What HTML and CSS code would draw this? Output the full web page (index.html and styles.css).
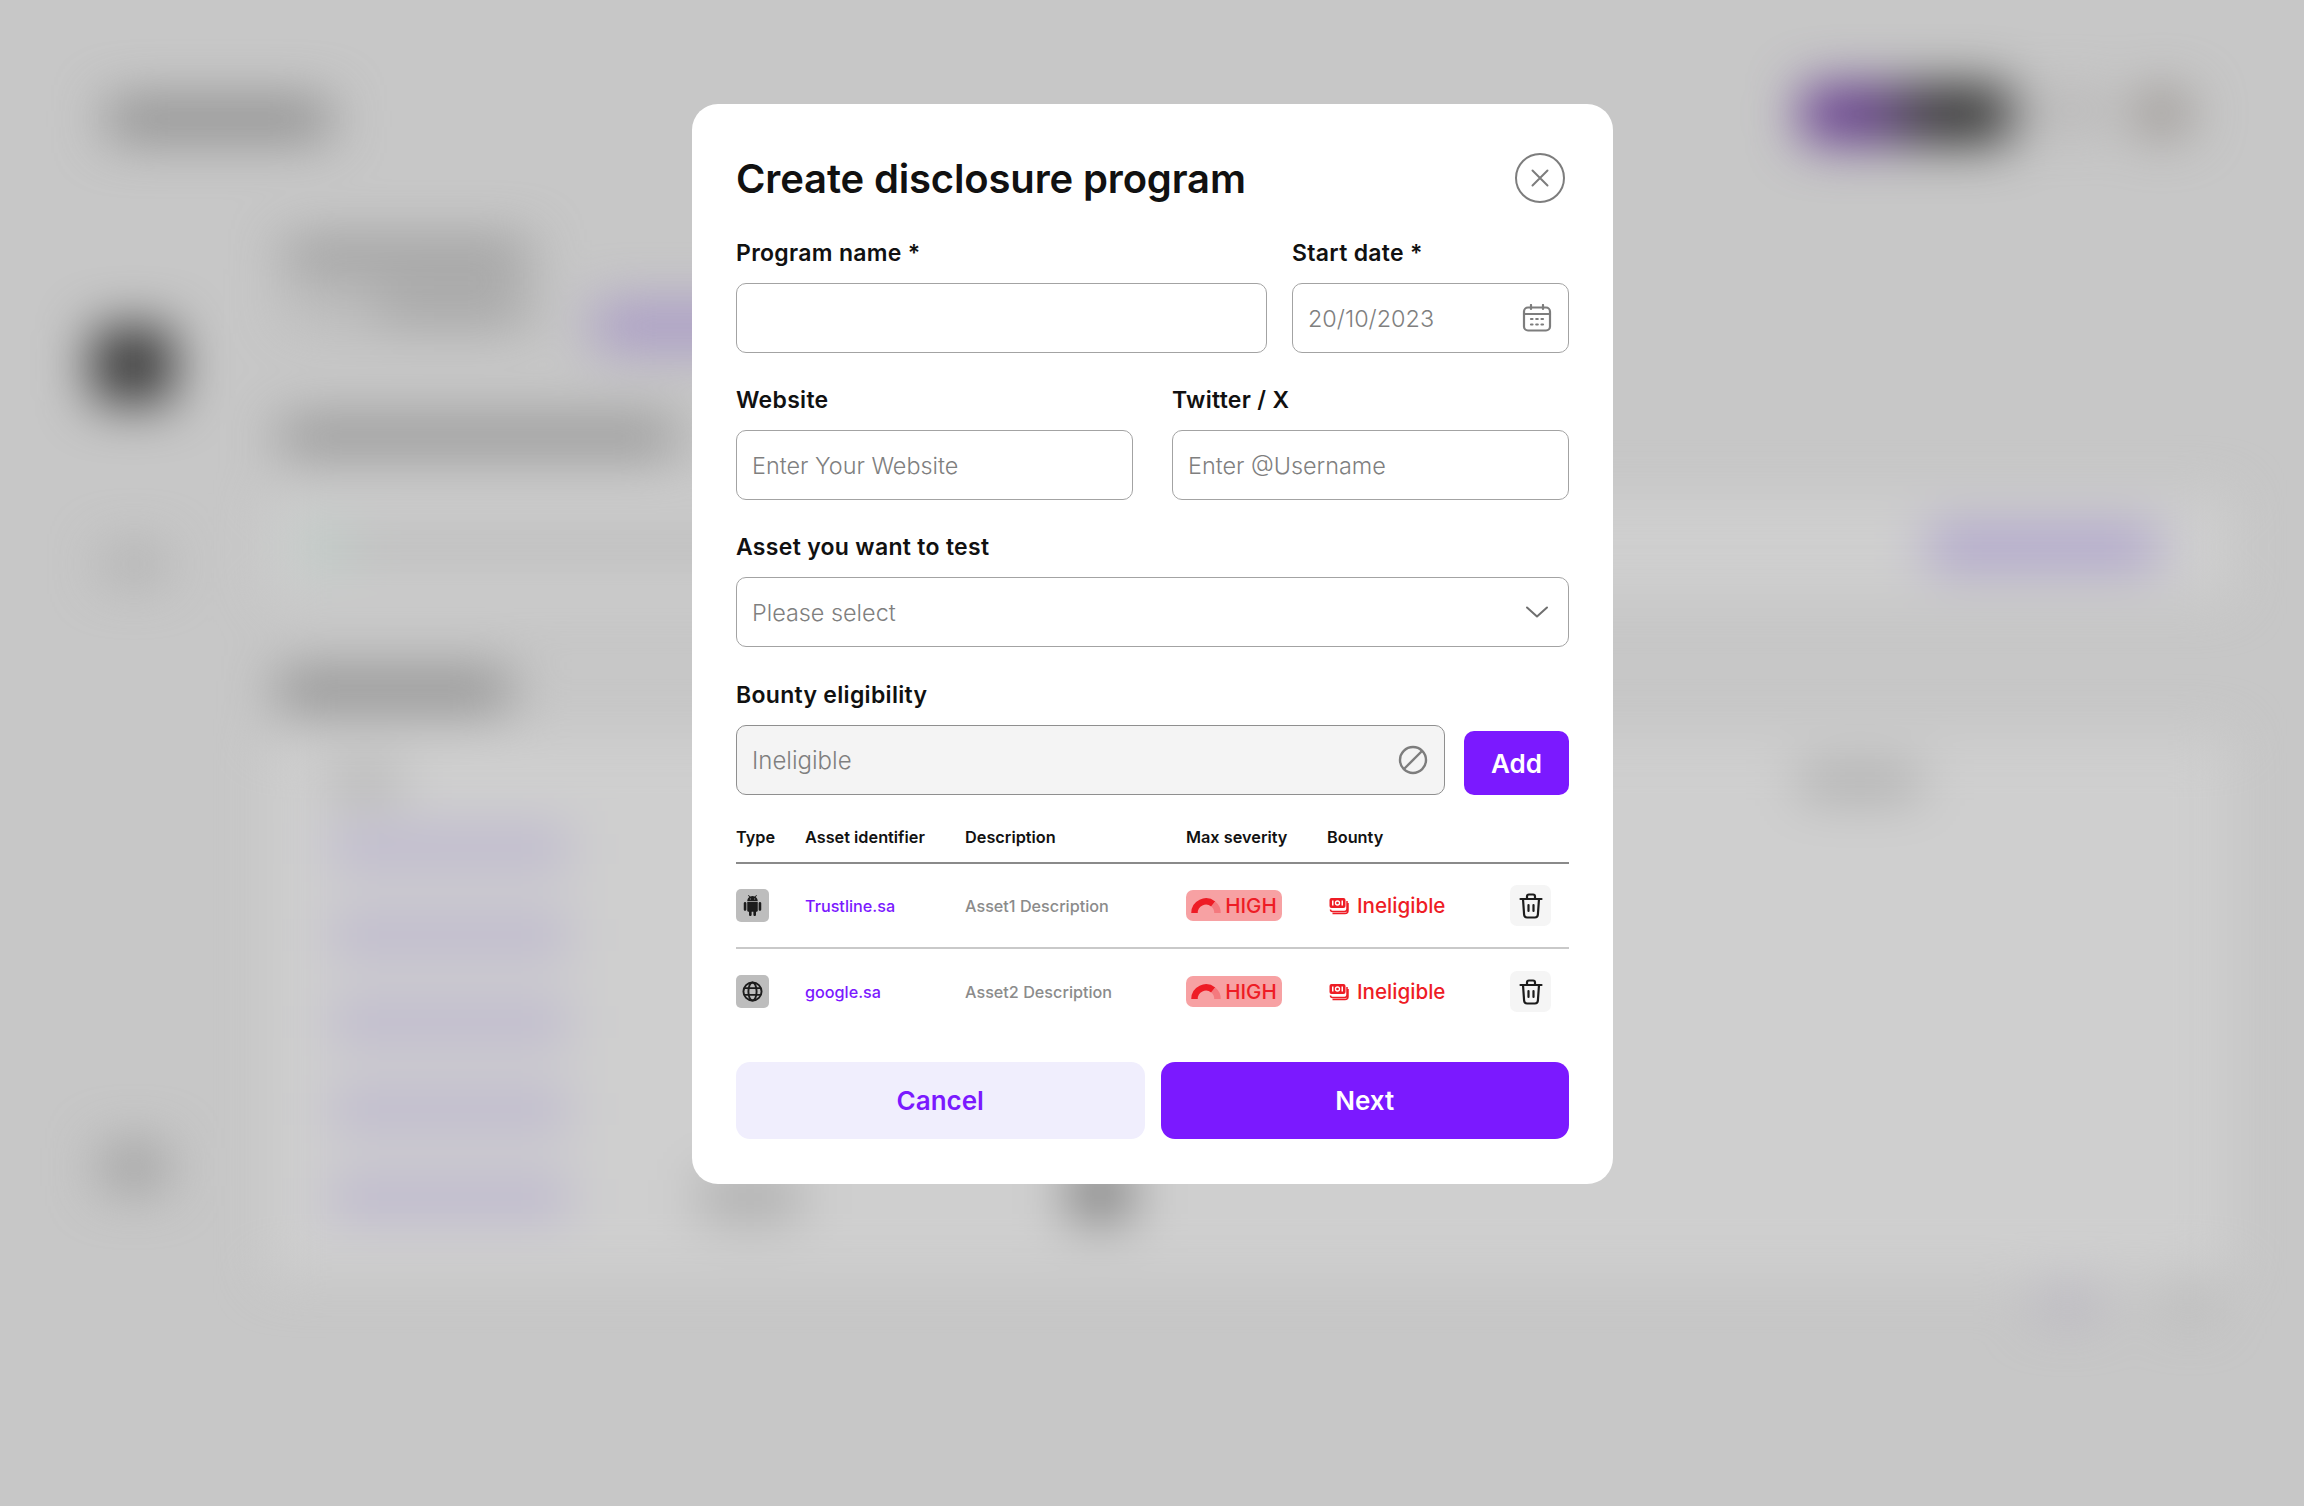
FILE: index.html
```html
<!DOCTYPE html>
<html lang="en">
<head>
  <meta charset="UTF-8">
  <title>Create disclosure program</title>
  <link rel="stylesheet" href="styles.css">
</head>
<body>
  <!-- Page behind the modal, only visible as a blur -->
  <div class="backdrop">
    <div class="bg-top">
      <div class="bg-logo"></div>
      <div class="bg-user">
        <div class="bg-wallet"></div>
        <div class="bg-bell"></div>
        <div class="bg-avatar"></div>
      </div>
    </div>
    <div class="bg-body">
      <div class="bg-side">
        <div class="bg-nav-active"></div>
        <div class="bg-nav"></div>
        <div class="bg-nav-bottom"></div>
      </div>
      <div class="bg-main">
        <div class="bg-heading">
          <div>
            <div class="bg-title"></div>
            <div class="bg-subtitle"></div>
          </div>
          <div class="bg-action"></div>
        </div>
        <div class="bg-line"></div>
        <div class="bg-band">
          <div class="bg-band-icon"></div>
          <div class="bg-band-text"></div>
          <div class="bg-band-button"></div>
        </div>
        <div class="bg-section"></div>
        <div class="bg-card">
          <div class="bg-row bg-row-head"><i class="c1"></i><i class="c7"></i></div>
          <div class="bg-row"><i class="c1 link"></i></div>
          <div class="bg-row"><i class="c1 link"></i></div>
          <div class="bg-row"><i class="c1 link"></i></div>
          <div class="bg-row"><i class="c1 link"></i></div>
          <div class="bg-row"><i class="c1 link"></i><i class="c3"></i><i class="c5"></i></div>
        </div>
        <div class="bg-pager"><i class="pg-a"></i><i class="pg-b"></i></div>
      </div>
    </div>
  </div>

  <div class="overlay">
    <form class="modal">
      <div class="modal-head">
        <h1>Create disclosure program</h1>
        <button type="button" class="close-btn" aria-label="Close">
          <svg width="20" height="20" viewBox="0 0 20 20"><path d="M2.5 2.5l15 15M17.5 2.5l-15 15" fill="none" stroke="#7d7d7d" stroke-width="2" stroke-linecap="round"/></svg>
        </button>
      </div>

      <div class="fields fields-name">
        <div class="field">
          <label>Program name *</label>
          <div class="input"></div>
        </div>
        <div class="field">
          <label>Start date *</label>
          <div class="input">
            <span class="placeholder">20/10/2023</span>
            <svg class="calendar" width="30" height="28" viewBox="0 0 30 28" fill="none" stroke="#7d7d7d" stroke-width="2.2">
              <rect x="2" y="3.5" width="26" height="23" rx="4"/>
              <path d="M2 10h26M9 1v4M21 1v4" stroke-linecap="round"/>
              <path d="M9 15h1.500M14.250 15h1.500M19.500 15h1.500M9 20.500h1.500M14.250 20.500h1.500M19.500 20.500h1.500" stroke-linecap="round"/>
            </svg>
          </div>
        </div>
      </div>

      <div class="fields fields-half">
        <div class="field">
          <label>Website</label>
          <div class="input"><span class="placeholder">Enter Your Website</span></div>
        </div>
        <div class="field">
          <label>Twitter / X</label>
          <div class="input"><span class="placeholder">Enter @Username</span></div>
        </div>
      </div>

      <div class="field field-asset">
        <label>Asset you want to test</label>
        <div class="input">
          <span class="placeholder">Please select</span>
          <svg class="chevron" width="24" height="14" viewBox="0 0 24 14"><path d="M2 2.500l10 9 10-9" fill="none" stroke="#6f6f6f" stroke-width="2" stroke-linecap="round" stroke-linejoin="round"/></svg>
        </div>
      </div>

      <div class="field field-bounty">
        <label>Bounty eligibility</label>
        <div class="bounty-row">
          <div class="input input-disabled">
            <span class="placeholder">Ineligible</span>
            <svg class="ban" width="30" height="30" viewBox="0 0 30 30" fill="none" stroke="#7d7d7d" stroke-width="2.400"><circle cx="15" cy="15" r="13"/><path d="M24 6L6 24"/></svg>
          </div>
          <button type="button" class="add-btn">Add</button>
        </div>
      </div>

      <div class="assets">
        <div class="asset-row asset-head">
          <span>Type</span>
          <span>Asset identifier</span>
          <span>Description</span>
          <span>Max severity</span>
          <span>Bounty</span>
        </div>

        <div class="asset-row">
          <span class="type-icon">
            <svg width="21" height="21" viewBox="0 0 24 24" fill="#1c1c1c"><path d="M6 18c0 .55.45 1 1 1h1v3.500c0 .83.67 1.500 1.500 1.500s1.500-.67 1.500-1.500V19h2v3.500c0 .83.67 1.500 1.500 1.500s1.500-.67 1.500-1.500V19h1c.55 0 1-.45 1-1V8H6v10zM3.500 8C2.670 8 2 8.670 2 9.500v7c0 .83.67 1.500 1.500 1.500S5 17.330 5 16.500v-7C5 8.670 4.330 8 3.500 8zm17 0c-.83 0-1.500.67-1.500 1.500v7c0 .83.67 1.500 1.500 1.500s1.500-.67 1.500-1.500v-7c0-.83-.67-1.500-1.500-1.500zm-4.970-5.840l1.300-1.300c.2-.2.2-.51 0-.71-.2-.2-.51-.2-.71 0l-1.480 1.480C13.850 1.230 12.950 1 12 1c-.96 0-1.860.23-2.660.63L7.850.15c-.2-.2-.51-.2-.71 0-.2.2-.2.51 0 .71l1.310 1.310C6.970 3.260 6 5.010 6 7h12c0-1.990-.97-3.750-2.470-4.840zM10 5H9V4h1v1zm5 0h-1V4h1v1z"/></svg>
          </span>
          <span class="asset-link">Trustline.sa</span>
          <span class="asset-desc">Asset1 Description</span>
          <span class="severity">
            <svg width="30" height="16" viewBox="0 0 30 16" fill="none" stroke-width="6.500"><path d="M3.500 15A11.500 11.500 0 0 1 22.200 6" stroke="#ee1c25"/><path d="M22.200 6A11.500 11.500 0 0 1 26.500 15" stroke="#f4797e"/></svg>
            HIGH
          </span>
          <span class="bounty">
            <svg width="20" height="18" viewBox="0 0 20 18"><rect x="0.500" y="1" width="16" height="10" rx="2" fill="#ee1c25"/><rect x="3" y="3.500" width="1.500" height="5" fill="#fff"/><circle cx="8.500" cy="6" r="2" fill="none" stroke="#fff" stroke-width="1.300"/><rect x="12.500" y="3.500" width="1.500" height="5" fill="#fff"/><path d="M1.500 12.500c0 1.500 1 2 2 2h12c1.500 0 2.500-1 2.500-2.500V4M3.500 16.500h12.500c1.700 0 3-1.300 3-3V6" fill="none" stroke="#ee1c25" stroke-width="1.500"/></svg>
            Ineligible
          </span>
          <button type="button" class="trash-btn" aria-label="Delete">
            <svg width="24" height="26" viewBox="0 0 24 26" fill="none" stroke="#1c1c1c" stroke-width="2.200" stroke-linecap="round" stroke-linejoin="round"><path d="M1.500 6h21M8 5.500V3.500c0-1.100.9-2 2-2h4c1.100 0 2 .9 2 2v2M4 6l1.100 15.500c.1 1.700 1.300 3 3 3h7.800c1.700 0 2.900-1.300 3-3L20 6M9.500 12v6M14.500 12v6"/></svg>
          </button>
        </div>

        <div class="asset-row">
          <span class="type-icon">
            <svg width="21" height="21" viewBox="0 0 22 22" fill="none" stroke="#1c1c1c" stroke-width="2"><circle cx="11" cy="11" r="9.500"/><ellipse cx="11" cy="11" rx="4.300" ry="9.500"/><path d="M2.300 7.500h17.400M2.300 14.500h17.400"/></svg>
          </span>
          <span class="asset-link">google.sa</span>
          <span class="asset-desc">Asset2 Description</span>
          <span class="severity">
            <svg width="30" height="16" viewBox="0 0 30 16" fill="none" stroke-width="6.500"><path d="M3.500 15A11.500 11.500 0 0 1 22.200 6" stroke="#ee1c25"/><path d="M22.200 6A11.500 11.500 0 0 1 26.500 15" stroke="#f4797e"/></svg>
            HIGH
          </span>
          <span class="bounty">
            <svg width="20" height="18" viewBox="0 0 20 18"><rect x="0.500" y="1" width="16" height="10" rx="2" fill="#ee1c25"/><rect x="3" y="3.500" width="1.500" height="5" fill="#fff"/><circle cx="8.500" cy="6" r="2" fill="none" stroke="#fff" stroke-width="1.300"/><rect x="12.500" y="3.500" width="1.500" height="5" fill="#fff"/><path d="M1.500 12.500c0 1.500 1 2 2 2h12c1.500 0 2.500-1 2.500-2.500V4M3.500 16.500h12.500c1.700 0 3-1.300 3-3V6" fill="none" stroke="#ee1c25" stroke-width="1.500"/></svg>
            Ineligible
          </span>
          <button type="button" class="trash-btn" aria-label="Delete">
            <svg width="24" height="26" viewBox="0 0 24 26" fill="none" stroke="#1c1c1c" stroke-width="2.200" stroke-linecap="round" stroke-linejoin="round"><path d="M1.500 6h21M8 5.500V3.500c0-1.100.9-2 2-2h4c1.100 0 2 .9 2 2v2M4 6l1.100 15.500c.1 1.700 1.300 3 3 3h7.800c1.700 0 2.900-1.300 3-3L20 6M9.500 12v6M14.500 12v6"/></svg>
          </button>
        </div>
      </div>

      <div class="modal-actions">
        <button type="button" class="btn-cancel">Cancel</button>
        <button type="button" class="btn-next">Next</button>
      </div>
    </form>
  </div>
</body>
</html>
```
FILE: styles.css
```css
* {
  margin: 0;
  box-sizing: border-box;
  font-family: 'Inter', 'Open Sans', Arial, sans-serif;
}
html, body {
  height: 100%;
}
body {
  background: #c7c7c7;
  overflow: hidden;
  position: relative;
}

/* Blurred page behind the modal */
.backdrop {
  height: 100%;
  filter: blur(26px);
}
.bg-top {
  display: flex;
  justify-content: space-between;
  padding: 101px 112px 0 108px;
  height: 137px;
}
.bg-logo {
  width: 222px;
  height: 36px;
  background: #858585;
}
.bg-user {
  display: flex;
  align-items: flex-start;
}
.bg-wallet {
  width: 210px;
  height: 56px;
  margin-top: -15px;
  border-radius: 14px;
  background: linear-gradient(90deg, #62318f 0%, #5e3a84 35%, #2c2c2c 60%, #2c2c2c 100%);
}
.bg-bell {
  width: 60px;
  height: 30px;
  margin: -6px 0 0 30px;
  background: #b2b0b0;
}
.bg-avatar {
  width: 60px;
  height: 44px;
  margin: -10px 0 0 30px;
  border-radius: 50%;
  background: #948e8a;
}
.bg-body {
  display: flex;
}
.bg-side {
  width: 270px;
  flex-shrink: 0;
  padding: 190px 0 0 92px;
}
.bg-nav-active {
  width: 82px;
  height: 76px;
  border-radius: 12px;
  background: #383838;
}
.bg-nav {
  width: 60px;
  height: 30px;
  margin: 146px 0 0 12px;
  background: #aaa;
}
.bg-nav-bottom {
  width: 64px;
  height: 44px;
  margin: 566px 0 0 10px;
  background: #9e9e9e;
}
.bg-main {
  flex: 1;
  padding-right: 74px;
}
.bg-heading {
  display: flex;
  padding: 105px 0 0 15px;
}
.bg-title {
  width: 245px;
  height: 26px;
  background: #8d8d8d;
}
.bg-subtitle {
  width: 245px;
  height: 26px;
  margin-top: 26px;
  background: linear-gradient(90deg, #b4b4b4 0%, #b4b4b4 30%, #929292 45%, #929292 100%);
}
.bg-action {
  width: 180px;
  height: 44px;
  margin: 62px 0 0 65px;
  background: #a797c6;
}
.bg-line {
  width: 395px;
  height: 30px;
  margin: 73px 0 0 10px;
  background: #8a8a8a;
}
.bg-band {
  display: flex;
  align-items: center;
  height: 100px;
  margin-top: 46px;
  background: #cfcfcf;
}
.bg-band-icon {
  width: 50px;
  height: 40px;
  margin-left: 30px;
  background: #b9c8c2;
}
.bg-band-text {
  width: 1000px;
  height: 18px;
  background: #a8a8a8;
}
.bg-band-button {
  width: 230px;
  height: 40px;
  margin-left: auto;
  margin-right: 72px;
  background: #aca0cc;
}
.bg-section {
  width: 232px;
  height: 34px;
  margin: 76px 0 0 8px;
  background: #878787;
}
.bg-card {
  height: 540px;
  margin-top: 29px;
  padding: 34px 0 0 60px;
  background: #cfcfcf;
}
.bg-row {
  display: grid;
  grid-template-columns: 240px 130px 100px 270px 60px 670px 120px;
  height: 40px;
  margin-bottom: 47px;
}
.bg-row-head {
  height: 24px;
  margin-bottom: 34px;
}
.bg-row i {
  display: block;
}
.c1 {
  grid-column: 1;
  background: #a9a9a9;
  width: 70px;
}
.c1.link {
  width: 240px;
  background: #bdb7cf;
}
.c3 {
  grid-column: 3;
  background: #aaa;
}
.c5 {
  grid-column: 5;
  height: 50px;
  margin-top: -8px;
  background: #777;
}
.c7 {
  grid-column: 7;
  background: #9f9f9f;
}
.bg-pager {
  display: flex;
  justify-content: flex-end;
  gap: 70px;
  margin-top: 16px;
  padding-right: 20px;
}
.pg-a {
  width: 65px;
  height: 24px;
  background: #b5b1bf;
}
.pg-b {
  width: 40px;
  height: 24px;
  background: #b2b2b2;
}

/* Modal */
.overlay {
  position: fixed;
  top: 0;
  left: 0;
  right: 0;
  bottom: 0;
  display: flex;
  justify-content: center;
  align-items: flex-start;
  padding: 104px 0 0 1px;
}
.modal {
  width: 921px;
  height: 1080px;
  padding: 48px 44px 0 44px;
  background: #fff;
  border-radius: 26px;
}
.modal-head {
  display: flex;
  align-items: center;
  justify-content: space-between;
  height: 51px;
  padding-right: 4px;
  margin-bottom: 38px;
}
h1 {
  font-size: 40px;
  font-weight: 600;
  color: #111;
  letter-spacing: -0.15px;
  padding-top: 1px;
}
.close-btn {
  width: 50px;
  height: 50px;
  padding: 0;
  display: flex;
  align-items: center;
  justify-content: center;
  background: #fff;
  border: 2px solid #7d7d7d;
  border-radius: 50%;
}
.fields {
  display: grid;
  margin-bottom: 35px;
}
.fields-name {
  grid-template-columns: 531px 277px;
  column-gap: 25px;
}
.fields-half {
  grid-template-columns: 397px 397px;
  column-gap: 39px;
}
.field label {
  display: block;
  height: 24px;
  margin-bottom: 18px;
  font-size: 23px;
  line-height: 24px;
  font-weight: 600;
  letter-spacing: 0.3px;
  color: #111;
}
.input {
  height: 70px;
  padding: 0 18px 0 15px;
  display: flex;
  align-items: center;
  justify-content: space-between;
  border: 1.5px solid #a3a3a3;
  border-radius: 10px;
  background: #fff;
}
.placeholder {
  padding-top: 1px;
  font-size: 23.4px;
  font-weight: 300;
  color: #7f7f7f;
}
.input-disabled .placeholder {
  font-size: 24px;
}
.calendar {
  margin-right: -2px;
}
.chevron {
  margin-right: 1px;
}
.field-asset {
  margin-bottom: 36px;
}
.bounty-row {
  display: flex;
  align-items: flex-end;
  gap: 19px;
}
.input-disabled {
  flex: 1;
  background: #f4f4f4;
  border-color: #8f8f8f;
}
.ban {
  margin-right: -2px;
}
.add-btn {
  width: 105px;
  height: 64px;
  border: none;
  border-radius: 10px;
  background: #7b19ff;
  color: #fff;
  font-size: 26px;
  font-weight: 600;
}

/* Assets table */
.assets {
  margin-top: 25px;
}
.asset-row {
  display: grid;
  grid-template-columns: 69px 160px 221px 141px 183px 41px;
  align-items: center;
  height: 85px;
  border-bottom: 2px solid #c9c9c9;
  font-size: 16.2px;
}
.asset-row:last-child {
  border-bottom: none;
}
.asset-head {
  height: 44px;
  padding-bottom: 8px;
  border-bottom: 2px solid #8a8a8a;
  font-size: 16.3px;
  font-weight: 600;
  color: #111;
}
.type-icon {
  width: 33px;
  height: 33px;
  display: flex;
  align-items: center;
  justify-content: center;
  border-radius: 5px;
  background: #bdbdbd;
}
.asset-link {
  color: #7b19ff;
  font-weight: 500;
}
.asset-desc {
  color: #8b8b8b;
  font-weight: 500;
}
.severity {
  width: 96px;
  height: 31px;
  display: flex;
  align-items: center;
  justify-content: center;
  gap: 4px;
  border-radius: 7px;
  background: #f7a1a3;
  color: #ee1c25;
  font-size: 20.5px;
  font-weight: 500;
}
.bounty {
  display: flex;
  align-items: center;
  gap: 8px;
  padding-left: 2px;
  color: #ee1c25;
  font-size: 20.6px;
  font-weight: 500;
}
.trash-btn {
  width: 41px;
  height: 41px;
  padding: 0;
  display: flex;
  align-items: center;
  justify-content: center;
  border: none;
  border-radius: 7px;
  background: #f5f5f5;
}
.modal-actions {
  display: grid;
  grid-template-columns: 1fr 1fr;
  gap: 16px;
  margin-top: 28px;
}
.modal-actions button {
  height: 77px;
  border: none;
  border-radius: 14px;
  font-size: 26px;
  font-weight: 600;
}
.btn-cancel {
  background: #f0eefd;
  color: #7b19ff;
}
.btn-next {
  background: #7b19ff;
  color: #fff;
}
```
